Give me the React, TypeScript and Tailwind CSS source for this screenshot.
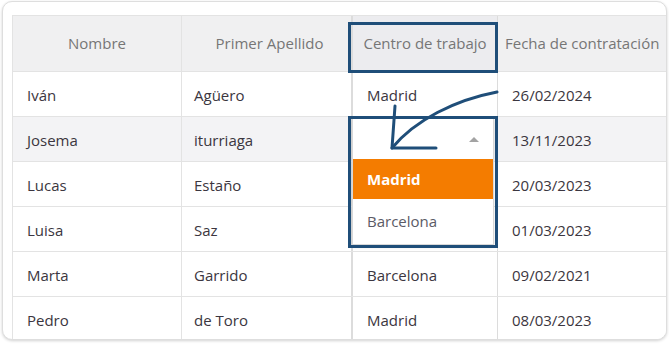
import React from "react";

type Row = { nombre: string; apellido: string; centro: string; fecha: string };

const rows: Row[] = [
  { nombre: "Iván", apellido: "Agüero", centro: "Madrid", fecha: "26/02/2024" },
  { nombre: "Josema", apellido: "iturriaga", centro: "", fecha: "13/11/2023" },
  { nombre: "Lucas", apellido: "Estaño", centro: "", fecha: "20/03/2023" },
  { nombre: "Luisa", apellido: "Saz", centro: "", fecha: "01/03/2023" },
  { nombre: "Marta", apellido: "Garrido", centro: "Barcelona", fecha: "09/02/2021" },
  { nombre: "Pedro", apellido: "de Toro", centro: "Madrid", fecha: "08/03/2023" },
];

const font = { fontFamily: '"Open Sans", "Noto Sans", sans-serif' };

export default function App() {
  return (
    <div className="relative w-[669px] h-[345px] bg-white overflow-hidden" style={font}>
      <div className="ml-[2px] mt-[1px] w-[665px] h-[339px] rounded-[10px] border border-[#dedede] bg-white shadow-[0_1px_3px_rgba(0,0,0,0.18)] overflow-hidden">
        <div className="pl-[9px] pt-[13px]">
          <div className="flex flex-col border-l border-[#e3e3e3] w-[700px]">
            {/* header */}
            <div className="flex h-[57px] bg-[#f0f0f1] border-t border-b border-[#e3e3e3] text-[15px] text-[#767676]">
              <div className="w-[169px] shrink-0 flex items-center justify-center border-r border-[#e3e3e3]">Nombre</div>
              <div className="w-[169px] shrink-0 flex items-center justify-center pl-[6px]">Primer Apellido</div>
              <div className="w-[147px] shrink-0 flex items-center justify-center border-l-2 border-r border-[#dcdcdc] bg-[#ececef] whitespace-nowrap">Centro de trabajo</div>
              <div className="w-[175px] shrink-0 flex items-center pl-[7px] whitespace-nowrap">Fecha de contratación</div>
            </div>
            {rows.map((r, i) => (
              <div
                key={r.nombre}
                className={`flex h-[45px] border-b border-[#e3e3e3] text-[15px] text-[#3b3640] ${i === 1 ? "bg-[#f3f3f5]" : "bg-white"}`}
              >
                <div className="w-[169px] shrink-0 flex items-center pl-[14px] pt-[2px] border-r border-[#e3e3e3]">{r.nombre}</div>
                <div className="w-[169px] shrink-0 flex items-center pl-[12px] pt-[2px]">{r.apellido}</div>
                <div className="w-[147px] shrink-0 flex items-center pl-[14px] pt-[2px] border-l-2 border-r border-[#dcdcdc]">{r.centro}</div>
                <div className="w-[175px] shrink-0 flex items-center pl-[14px] pt-[2px]">{r.fecha}</div>
              </div>
            ))}
          </div>
        </div>
      </div>

      {/* dropdown editor */}
      <div className="absolute left-[352px] top-[118px] w-[142px] h-[127px] bg-white border border-[#d8d8d8] shadow-[0_2px_4px_rgba(0,0,0,0.12)] flex flex-col text-[15px]">
        <div className="h-[40px] flex items-center justify-end pr-[14px]">
          <span className="block w-0 h-0 border-l-[5px] border-r-[5px] border-b-[5px] border-l-transparent border-r-transparent border-b-[#a3a3a3]" />
        </div>
        <div className="h-[40px] flex items-center pl-[14px] bg-[#f47c00] text-white font-bold">Madrid</div>
        <div className="h-[44px] flex items-center pl-[14px] text-[#5b5b66]">Barcelona</div>
      </div>

      {/* annotation boxes */}
      <div className="absolute left-[348px] top-[22px] w-[150px] h-[51px] border-[3px] border-[#1f4e79]" />
      <div className="absolute left-[348px] top-[116px] w-[150px] h-[132px] border-[3px] border-[#1f4e79]" />

      {/* arrow */}
      <svg className="absolute left-0 top-0" width="669" height="345" viewBox="0 0 669 345" fill="none">
        <path d="M497 92 C455 100 415 120 392 148" stroke="#1f4e79" strokeWidth="3" strokeLinecap="round" />
        <path d="M395 106 L392 148 L436 148" stroke="#1f4e79" strokeWidth="3" strokeLinecap="round" strokeLinejoin="round" />
      </svg>
    </div>
  );
}
